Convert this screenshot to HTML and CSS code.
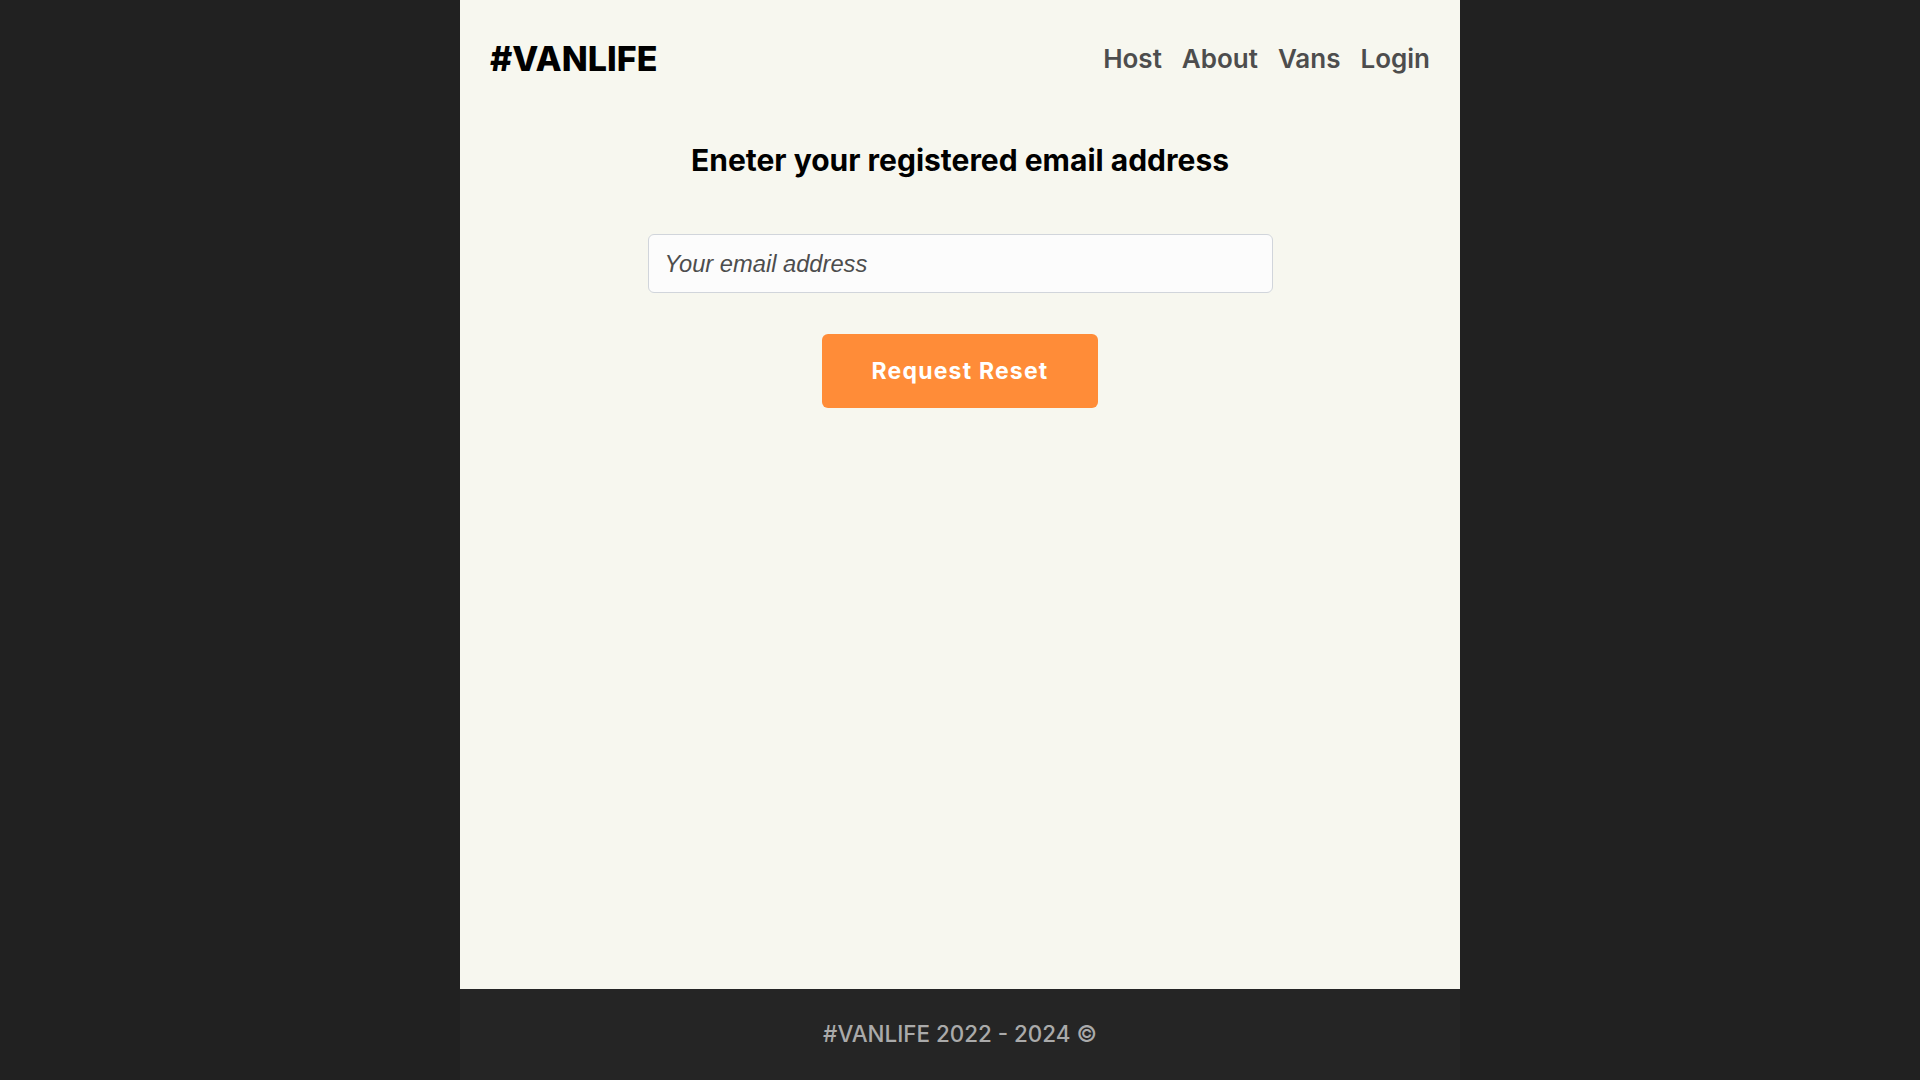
FILE: index.html
```html
<!DOCTYPE html>
<html lang="en">
<head>
<meta charset="utf-8">
<title>#VANLIFE</title>
<link rel="stylesheet" href="styles.css">
</head>
<body>
<div class="site-wrapper">
  <header class="site-header">
    <a class="logo" href="#">#VANLIFE</a>
    <nav class="nav">
      <a href="#">Host</a>
      <a href="#">About</a>
      <a href="#">Vans</a>
      <a href="#">Login</a>
    </nav>
  </header>
  <main class="main">
    <h1 class="title">Eneter your registered email address</h1>
    <form class="reset-form">
      <input class="email-input" type="email" placeholder="Your email address">
      <button class="reset-btn" type="button">Request Reset</button>
    </form>
  </main>
  <footer class="site-footer">#VANLIFE 2022 - 2024 &copy;</footer>
</div>
</body>
</html>
```
FILE: styles.css
```css
* { box-sizing: border-box; }
html, body { margin: 0; padding: 0; }
body {
  background: #212121;
  font-family: Inter, "Noto Sans", sans-serif;
}
.site-wrapper {
  width: 1000px;
  margin: 0 auto;
  min-height: 100vh;
  display: flex;
  flex-direction: column;
  background: #f7f7ef;
}
.site-header {
  height: 118px;
  padding: 0 30px;
  display: flex;
  align-items: center;
  justify-content: space-between;
}
.logo {
  color: #000;
  text-decoration: none;
  font-size: 34px;
  font-weight: 800;
  line-height: 1;
}
.nav { display: flex; gap: 20px; padding-bottom: 2px; }
.nav a {
  color: #4d4d4d;
  text-decoration: none;
  font-size: 26px;
  font-weight: 600;
}
.main {
  flex: 1;
  display: flex;
  flex-direction: column;
  align-items: center;
}
.title {
  margin: 24px 0 0;
  font-size: 30px;
  line-height: 36px;
  font-weight: 700;
  color: #000;
}
.reset-form {
  display: flex;
  flex-direction: column;
  align-items: center;
}
.email-input {
  margin-top: 56px;
  width: 625px;
  height: 59px;
  border: 1px solid #d1d5db;
  border-radius: 6px;
  background: #fcfcfc;
  padding: 2px 16px 0;
  font-family: "Liberation Sans", Arial, sans-serif;
  font-size: 23.7px;
  color: #4d4d4d;
}
.email-input::placeholder {
  color: #4d4d4d;
  font-style: italic;
}
.reset-btn {
  margin-top: 41px;
  width: 276px;
  height: 74px;
  border: none;
  border-radius: 6px;
  background: #ff8c38;
  color: #fff;
  font-family: Inter, sans-serif;
  font-size: 23px;
  font-weight: 700;
  letter-spacing: 1.2px;
  cursor: pointer;
}
.site-footer {
  height: 91px;
  padding-bottom: 2px;
  background: #252525;
  color: #aaaaaa;
  font-size: 22.4px;
  font-weight: 500;
  display: flex;
  align-items: center;
  justify-content: center;
}
```
